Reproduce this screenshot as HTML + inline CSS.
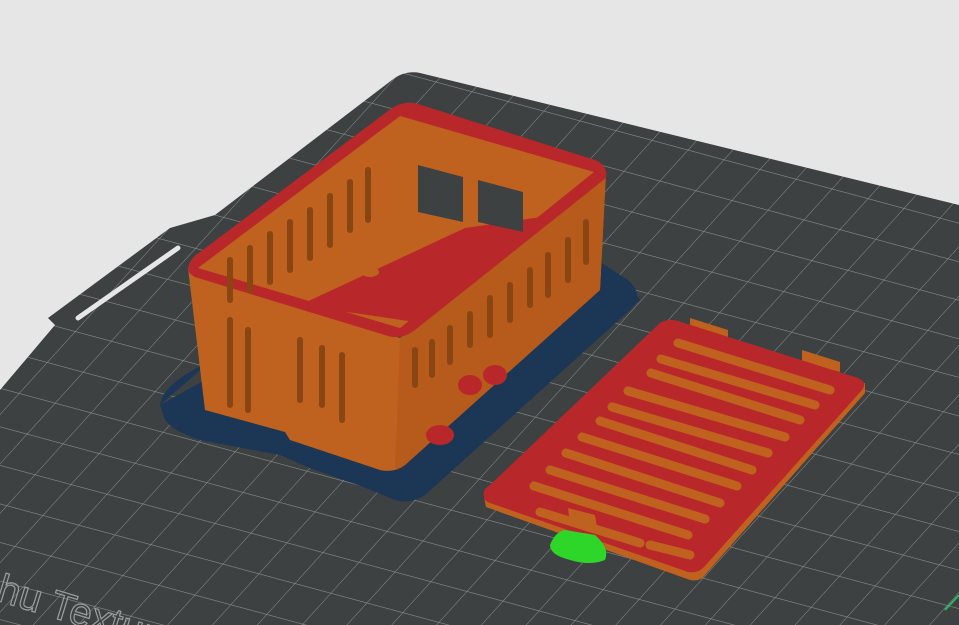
<!DOCTYPE html>
<html><head><style>
html,body{margin:0;padding:0;background:#e6e6e6;width:959px;height:625px;overflow:hidden}
</style></head><body>
<svg width="959" height="625" viewBox="0 0 959 625" xmlns="http://www.w3.org/2000/svg" style="display:block">
<defs>
<pattern id="g" width="36" height="36" patternUnits="userSpaceOnUse" patternTransform="matrix(1 0.27 -0.78 0.86 400 72)">
<rect width="36" height="36" fill="#3d4141"/>
<path d="M0 0H36M0 0V36" stroke="#8e9494" stroke-width="1"/>
</pattern>
</defs>
<path d="M0 390 L55 325 L48 318 L170 228 L215 215 L392 80 Q405 70 420 73 L959 205 L959 625 L0 625Z" fill="url(#g)"/>
<path d="M78 318 L178 248" stroke="#e6e6e6" stroke-width="5" stroke-linecap="round"/>
<text x="0" y="0" transform="translate(-5 600) rotate(17)" font-family="Liberation Sans, sans-serif" font-size="40" fill="none" stroke="#9aa0a0" stroke-width="1.2">hu Textur</text>
<path d="M945 610 L959 595" stroke="#2bb56a" stroke-width="2"/>
<!-- brim -->
<path d="M160 405 Q162 390 185 375 L210 360 L300 455 Q300 462 310 465 L395 500 Q410 505 425 495 L630 310 Q645 295 628 280 L600 262 L470 440 L300 440 L212 360 Z" fill="#1c3656"/>
<path d="M160 405 L165 420 Q175 432 200 440 L280 455 L310 468 L400 500 L640 300 L625 278 L400 400 L205 380 Z" fill="#1c3656"/>
<!-- box body -->
<path d="M188 268 L205 410 L285 432 L290 440 L380 470 Q395 473 405 465 L600 290 L606 172 L400 338 Z" fill="#c0621f"/>
<path d="M400 338 L606 172 L600 290 L405 465 L395 470 Z" fill="#b75b1c"/>
<!-- rim top / interior -->
<path d="M188 268 Q190 258 200 252 L392 108 Q405 100 418 104 L595 160 Q608 165 606 178 L415 330 Q402 340 388 336 L198 278 Q188 275 188 268Z" fill="#b8282a"/>
<path d="M198 268 L400 116 L594 172 L400 328 Z" fill="#c0621f"/>
<path d="M300 305 L465 228 L555 215 L415 322 Z" fill="#b8282a"/>
<!-- back walls windows -->
<path d="M418 165 L463 177 L463 222 L418 212Z M478 180 L523 192 L523 232 L478 222Z" fill="#3d4141"/>
<g stroke="#8a4612" stroke-width="6" stroke-linecap="round">
<path d="M230 260V300M250 248V290M270 234V282M290 222V270M310 210V258M330 196V245M350 182V230M368 170V220"/>
<path d="M230 320V405M248 330V410M300 340V400M322 348V405M342 355V420M415 350V385M432 342V375M450 328V362M470 314V345M490 298V335M510 285V320M530 270V305M548 255V295M568 240V280M586 222V262"/>
</g>
<ellipse cx="440" cy="435" rx="14" ry="10" fill="#b8282a"/>
<ellipse cx="470" cy="385" rx="12" ry="10" fill="#b8282a"/>
<ellipse cx="495" cy="375" rx="12" ry="10" fill="#b8282a"/>
<ellipse cx="370" cy="272" rx="9" ry="5" fill="#c0621f"/>
<!-- lid -->
<path d="M484 497 L486 507 L690 580 Q700 582 705 575 L865 393 L865 383 Z" fill="#c0621f"/>
<path d="M690 318 L728 330 L728 342 L690 332Z M802 350 L840 362 L840 372 L802 362Z" fill="#c0621f"/>
<path d="M484 497 Q482 490 490 485 L660 323 Q668 318 678 321 L858 378 Q868 382 862 390 L705 566 Q698 574 688 572 L490 503 Q484 501 484 497Z" fill="#b8282a"/>
<g stroke="#c0621f" stroke-width="9" stroke-linecap="round">
<path d="M678 343L830 390M661 359L815 405M651 373L800 420M628 391L785 437M612 407L768 453M600 421L752 470M582 437L737 486M566 453L720 503M550 470L705 519M534 486L688 535M540 512L640 543M650 545L690 555"/>
</g>
<path d="M568 508 L595 515 L598 533 L570 525Z" fill="#c0621f"/>
<path d="M550 545 Q555 532 565 530 L595 535 Q610 548 605 560 Q590 566 570 560 Q550 555 550 545Z" fill="#2fd62a"/>
</svg>
</body></html>
